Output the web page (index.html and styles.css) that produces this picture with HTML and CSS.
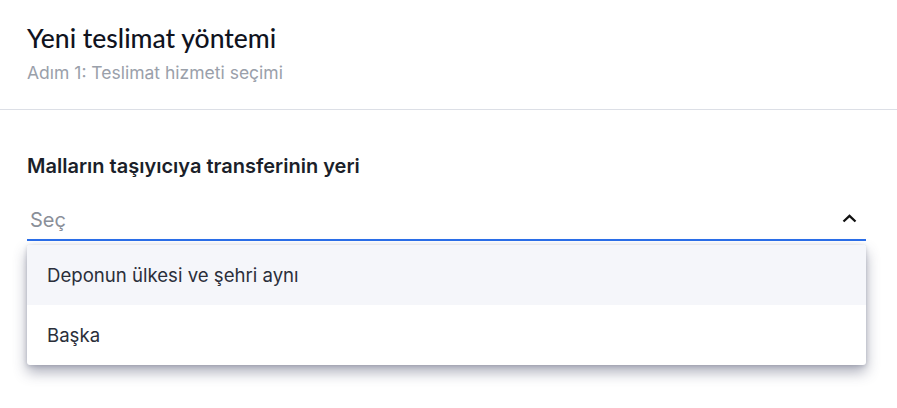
FILE: index.html
```html
<!DOCTYPE html>
<html lang="tr">
<head>
<meta charset="utf-8">
<link rel="stylesheet" href="styles.css">
</head>
<body>
<div class="page">
  <header class="head">
    <h1 class="title">Yeni teslimat yöntemi</h1>
    <div class="subtitle">Adım 1: Teslimat hizmeti seçimi</div>
  </header>
  <section class="body">
    <div class="label">Malların taşıyıcıya transferinin yeri</div>
    <div class="field">
      <div class="select">
        <span class="placeholder">Seç</span>
        <svg class="chev" width="15" height="9" viewBox="0 0 15 9"><path d="M1.5 7.5 L7.5 1.8 L13.5 7.5" fill="none" stroke="#111" stroke-width="2.3"/></svg>
      </div>
      <div class="menu">
        <div class="opt hover">Deponun ülkesi ve şehri aynı</div>
        <div class="opt">Başka</div>
      </div>
    </div>
  </section>
</div>
</body>
</html>
```
FILE: styles.css
```css
html, body { margin: 0; padding: 0; background: #fff; }
body { font-family: Inter, "Noto Sans", sans-serif; color: #1b1f2a; }
.page { width: 897px; height: 408px; overflow: hidden; }
.head { padding: 22px 27px 24px; border-bottom: 1px solid #dcdfe6; }
.title { margin: 0; font-family: Lato, "Noto Sans", sans-serif; font-weight: 500; font-size: 26.5px; line-height: 32px; color: #10131e; }
.subtitle { margin-top: 7px; font-size: 17.5px; line-height: 24px; color: #9aa0aa; }
.body { padding: 43px 31px 0 27px; }
.label { font-size: 20px; font-weight: 600; line-height: 26px; color: #1b1f2a; }
.field { position: relative; margin-top: 18px; }
.select { display: flex; align-items: center; justify-content: space-between; box-sizing: border-box; padding: 3px 4px 0 3px; border-bottom: 2px solid #2b6ee9; height: 44px; }
.placeholder { font-size: 20px; color: #8a8f99; }
.chev { margin-right: 5px; margin-top: -2px; }
.menu { position: absolute; left: 0; right: 0; top: 48px; background: #fff; border-radius: 3px; box-shadow: 0 7px 14px rgba(55,60,90,0.42), 0 1px 4px rgba(55,60,90,0.22); overflow: hidden; }
.opt { height: 60px; display: flex; align-items: center; padding-left: 20px; font-size: 18.6px; color: #2b2f3a; }
.opt.hover { background: #f5f6fa; }
```
